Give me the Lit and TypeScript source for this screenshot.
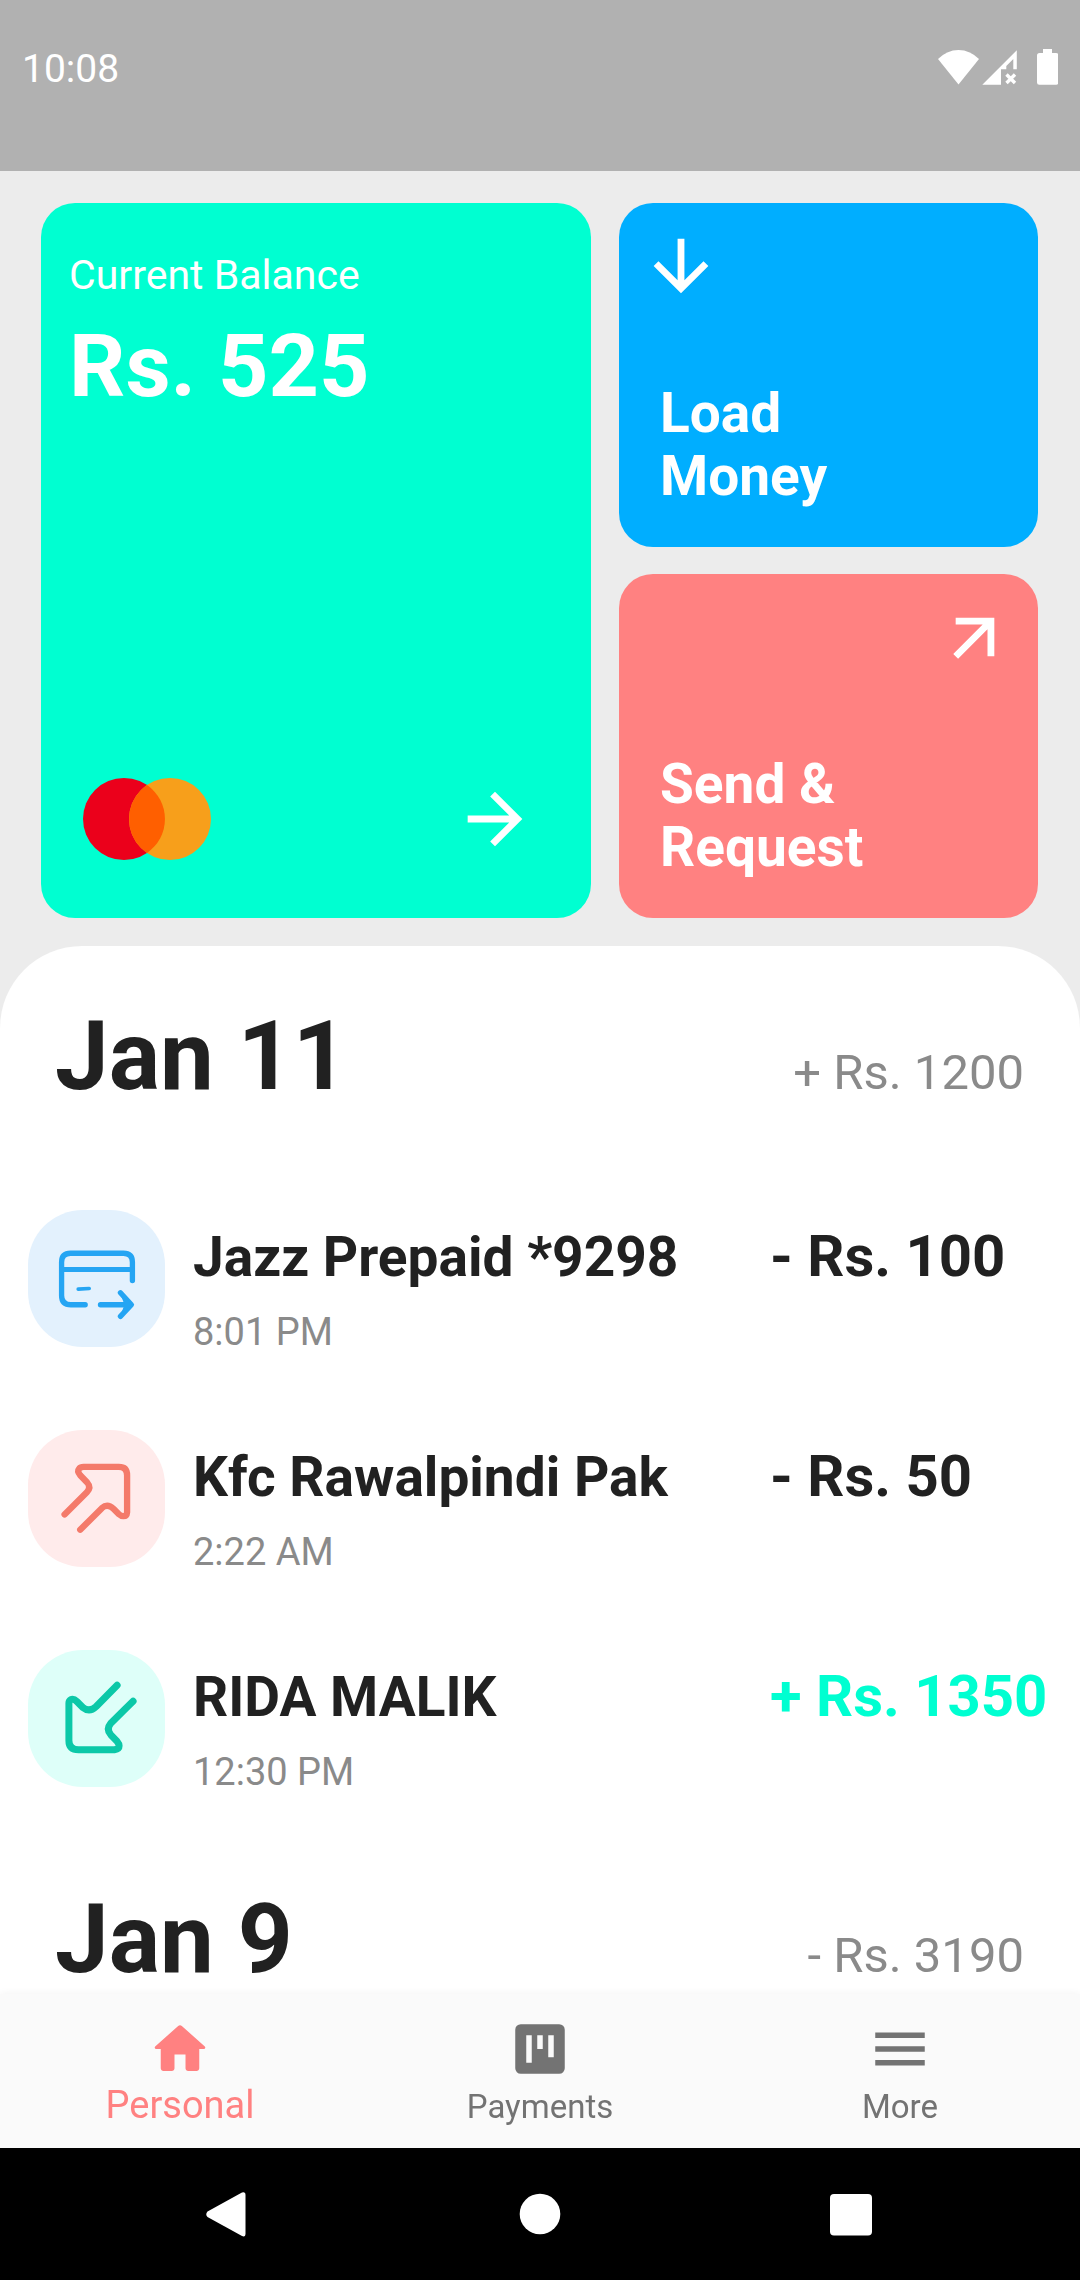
import { LitElement, html, css, svg, nothing } from "lit";
import { customElement, property } from "lit/decorators.js";
import { classMap } from "lit/directives/class-map.js";

type Kind = "card" | "out" | "in";

interface Transaction {
  kind: Kind;
  name: string;
  time: string;
  amount: string;
}

interface Day {
  date: string;
  total: string;
  items: Transaction[];
}

const DAYS: Day[] = [
  {
    date: "Jan 11",
    total: "+ Rs. 1200",
    items: [
      { kind: "card", name: "Jazz Prepaid *9298", time: "8:01 PM", amount: "- Rs. 100" },
      { kind: "out", name: "Kfc Rawalpindi Pak", time: "2:22 AM", amount: "- Rs. 50" },
      { kind: "in", name: "RIDA MALIK", time: "12:30 PM", amount: "+ Rs. 1350" },
    ],
  },
  { date: "Jan 9", total: "- Rs. 3190", items: [] },
];

const arrowForward = svg`<path d="M12 4l-1.41 1.41L16.17 11H4v2h12.17l-5.58 5.59L12 20l8-8z"></path>`;

const KIND_ICONS = {
  card: svg`
    <g fill="none" stroke="#25a5f3" stroke-width="16" stroke-linecap="round" stroke-linejoin="round">
      <path d="M398 272V217Q398 190 371 190H212Q185 190 185 217V317Q185 345 213 345H256"></path>
      <path stroke-width="15" d="M186 239H397"></path>
      <path stroke-width="11" d="M235 298L268 296"></path>
      <path d="M302 345H385M362 309L395 345L362 380"></path>
    </g>
    <path fill="#25a5f3" d="M362 312L398 345L362 378L374 345Z"></path>`,
  out: svg`
    <path fill="none" stroke="#f47a6a" stroke-width="19" stroke-linecap="round" stroke-linejoin="round"
      d="M194 314L261 247Q275 233 262 218L241 196Q231 184 238 176Q242 171 251 171H357Q382 171 382 196V307Q381 319 371 319Q364 319 356 312L341 297Q323 280 306 295L241 360"></path>`,
  in: svg`
    <path fill="none" stroke="#0cc8a8" stroke-width="21" stroke-linecap="round" stroke-linejoin="round"
      d="M352 166L289 230Q269 249 249 233L231 215Q221 205 213 209Q207 212 207 220V332Q207 360 236 360H344Q358 358 358 348Q358 342 352 335L333 315Q318 298 333 280L400 214"></path>`,
};

@customElement("transaction-row")
class TransactionRow extends LitElement {
  @property({ attribute: false }) item!: Transaction;

  static styles = css`
    :host {
      display: block;
    }
    .row {
      display: grid;
      grid-template-columns: 137px 1fr 283px;
      align-items: start;
      column-gap: 28px;
      height: 220px;
      box-sizing: border-box;
      padding: 41px 27px 0 28px;
    }
    .row > .text {
      margin-right: -28px;
    }
    .tile {
      height: 137px;
      border-radius: 55px;
    }
    .tile.card {
      background: #e3f1fd;
    }
    .tile.out {
      background: #ffebeb;
    }
    .tile.in {
      background: #defff9;
    }
    .tile svg {
      display: block;
      width: 100%;
      height: 100%;
    }
    .text {
      padding-top: 15px;
      white-space: nowrap;
    }
    .name {
      font-size: 55px;
      line-height: 64px;
      font-weight: 700;
    }
    .time {
      margin-top: 20px;
      font-size: 38px;
      line-height: 46px;
      color: #8a8a8a;
    }
    .amount {
      padding-top: 12px;
      font-size: 58px;
      line-height: 68px;
      font-weight: 700;
      white-space: nowrap;
    }
    .amount.in {
      color: #00ffd1;
    }
  `;

  render() {
    const { kind, name, time, amount } = this.item;
    return html`
      <div class="row">
        <div class=${classMap({ tile: true, [kind]: true })}>
          <svg viewBox="84 60 412 412" aria-hidden="true">${KIND_ICONS[kind]}</svg>
        </div>
        <div class="text">
          <div class="name">${name}</div>
          <div class="time">${time}</div>
        </div>
        <div class=${classMap({ amount: true, in: kind === "in" })}>${amount}</div>
      </div>
    `;
  }
}

@customElement("app-root")
class AppRoot extends LitElement {
  static styles = css`
    :host {
      display: flex;
      flex-direction: column;
      height: 100vh;
      background: #ececec;
      color: #212121;
      font-family: Roboto, "Liberation Sans", sans-serif;
    }
    button {
      margin: 0;
      border: 0;
      padding: 0;
      background: none;
      color: inherit;
      font: inherit;
      text-align: left;
    }
    svg {
      display: block;
      flex: none;
    }
    .status {
      display: flex;
      justify-content: space-between;
      align-items: center;
      padding: 45px 22px 78px 22px;
      background: #b1b1b1;
      color: #fff;
      font-size: 39px;
      line-height: 48px;
    }
    .status svg {
      width: 120px;
      height: 40px;
    }
    .cards {
      display: grid;
      grid-template-columns: 550fr 419fr;
      grid-template-rows: 344px 344px;
      gap: 27px 28px;
      padding: 32px 42px 28px 41px;
      color: #fff;
    }
    .panel {
      display: flex;
      flex-direction: column;
      justify-content: space-between;
      border-radius: 34px;
    }
    .arrow {
      width: 82px;
      height: 82px;
      fill: #fff;
    }
    .balance {
      grid-row: span 2;
      padding: 48px 55px 58px 28px;
      background: #00ffd1;
    }
    .caption {
      font-size: 41px;
      line-height: 48px;
    }
    .value {
      margin-top: 15px;
      font-size: 88px;
      line-height: 104px;
      font-weight: 700;
    }
    .foot {
      display: flex;
      justify-content: space-between;
      align-items: center;
      padding-left: 14px;
    }
    .brand {
      width: 128px;
      height: 82px;
    }
    .action {
      padding: 22px 22px 39px 21px;
      font-size: 55px;
      line-height: 63px;
      font-weight: 700;
    }
    .action .label {
      padding-left: 20px;
    }
    .load {
      background: #00aeff;
    }
    .send {
      background: #ff8181;
    }
    .load .arrow {
      transform: rotate(90deg);
    }
    .send .arrow {
      align-self: flex-end;
      transform: rotate(-45deg);
    }
    .sheet {
      flex: 1 1 0;
      min-height: 0;
      overflow-y: auto;
      scrollbar-width: none;
      border-radius: 82px 82px 0 0;
      background: #fff;
    }
    .day {
      display: flex;
      justify-content: space-between;
      align-items: baseline;
      padding: 55px 56px 58px 55px;
    }
    .date {
      margin: 0;
      font-size: 96px;
      line-height: 110px;
      font-weight: 700;
    }
    .total {
      font-size: 49px;
      line-height: 58px;
      color: #8a8a8a;
    }
    .tabs {
      display: grid;
      grid-template-columns: repeat(3, 1fr);
      padding: 22px 0 20px;
      background: #fafafa;
      box-shadow: 0 0 8px rgba(0, 0, 0, 0.06);
      z-index: 1;
    }
    .tab {
      display: flex;
      flex-direction: column;
      align-items: center;
      color: #737373;
      text-decoration: none;
      font-size: 38px;
      line-height: 46px;
    }
    .tab svg {
      width: 66px;
      height: 66px;
      fill: currentColor;
    }
    .tab .small {
      font-size: 33px;
      line-height: 0;
    }
    .tab.active {
      color: #ff8181;
    }
    .system {
      display: flex;
      justify-content: space-between;
      padding: 25px 187px;
      background: #000;
      z-index: 1;
    }
    .system svg {
      width: 82px;
      height: 82px;
      fill: #fff;
    }
  `;

  private renderTab(label: string, icon: unknown, active = false) {
    return html`
      <a class=${classMap({ tab: true, active })} href="#${label.toLowerCase()}"
        aria-current=${active ? "page" : nothing}>
        <svg viewBox="0 0 24 24" aria-hidden="true">${icon}</svg>
        <div><span class=${classMap({ small: !active })}>${label}</span></div>
      </a>
    `;
  }

  render() {
    return html`
      <header class="status">
        <span>10:08</span>
        <svg viewBox="0 0 120 40" fill="#fff" aria-hidden="true">
          <path d="M0 10A28 28 0 0 1 41 10L20.5 35.5Z"></path>
          <path d="M44.3 35.7L78.8 1.2V20.3H75.3V10L68.3 17V20.3H63V35.7Z"></path>
          <path d="M68.5 25.5L77 34M77 25.5L68.5 34" stroke="#fff" stroke-width="3.4"></path>
          <path d="M105 0h9v4h4q2.500 0 2.500 2.500v27q0 2.200-2.200 2.200h-17q-2.300 0-2.300-2.200v-27q0-2.500 2.500-2.500h3.500z"></path>
        </svg>
      </header>

      <section class="cards">
        <button class="panel balance">
          <div>
            <div class="caption">Current Balance</div>
            <div class="value">Rs. 525</div>
          </div>
          <div class="foot">
            <svg class="brand" viewBox="0 0 128 82" aria-hidden="true">
              <circle cx="41" cy="41" r="41" fill="#eb001b"></circle>
              <circle cx="87" cy="41" r="41" fill="#f79f1b"></circle>
              <path fill="#ff5f00" d="M64 7.100A41 41 0 0 1 64 74.900A41 41 0 0 1 64 7.100Z"></path>
            </svg>
            <svg class="arrow" viewBox="0 0 24 24" aria-hidden="true">${arrowForward}</svg>
          </div>
        </button>
        <button class="panel action load">
          <svg class="arrow" viewBox="0 0 24 24" aria-hidden="true">${arrowForward}</svg>
          <div class="label">Load<br />Money</div>
        </button>
        <button class="panel action send">
          <svg class="arrow" viewBox="0 0 24 24" aria-hidden="true">${arrowForward}</svg>
          <div class="label">Send &amp;<br />Request</div>
        </button>
      </section>

      <main class="sheet">
        ${DAYS.map(
          (day) => html`
            <div class="day">
              <h2 class="date">${day.date}</h2>
              <span class="total">${day.total}</span>
            </div>
            ${day.items.map((item) => html`<transaction-row .item=${item}></transaction-row>`)}
          `
        )}
      </main>

      <nav class="tabs">
        ${this.renderTab(
          "Personal",
          svg`<path d="M10 19v-5h4v5c0 .55.45 1 1 1h3c.55 0 1-.45 1-1v-7h1.700c.46 0 .68-.57.33-.87L12.670 3.600c-.38-.34-.96-.34-1.340 0l-8.360 7.530c-.34.3-.13.87.33.87H5v7c0 .55.45 1 1 1h3c.55 0 1-.45 1-1z"></path>`,
          true
        )}
        ${this.renderTab(
          "Payments",
          svg`<path fill-rule="evenodd" d="M5 3h14a2 2 0 0 1 2 2v14a2 2 0 0 1-2 2H5a2 2 0 0 1-2-2V5a2 2 0 0 1 2-2zM7 7v10h2V7zM11 7v5h2V7zM15 7v8h2V7z"></path>`
        )}
        ${this.renderTab("More", svg`<path d="M3 18h18v-2H3v2zm0-5h18v-2H3v2zm0-7v2h18V6H3z"></path>`)}
      </nav>

      <footer class="system">
        <button aria-label="Back">
          <svg viewBox="0 0 82 82" aria-hidden="true">
            <path d="M20.500 38.500L55 19.500Q58.500 18.500 58.500 22V60.500Q58.500 64.500 55 63L20.500 44Q18 41.300 20.500 38.500Z"></path>
          </svg>
        </button>
        <button aria-label="Home">
          <svg viewBox="0 0 82 82" aria-hidden="true"><circle cx="41" cy="41" r="20.300"></circle></svg>
        </button>
        <button aria-label="Overview">
          <svg viewBox="0 0 82 82" aria-hidden="true"><rect x="19" y="21" width="42" height="41.500" rx="4"></rect></svg>
        </button>
      </footer>
    `;
  }
}
